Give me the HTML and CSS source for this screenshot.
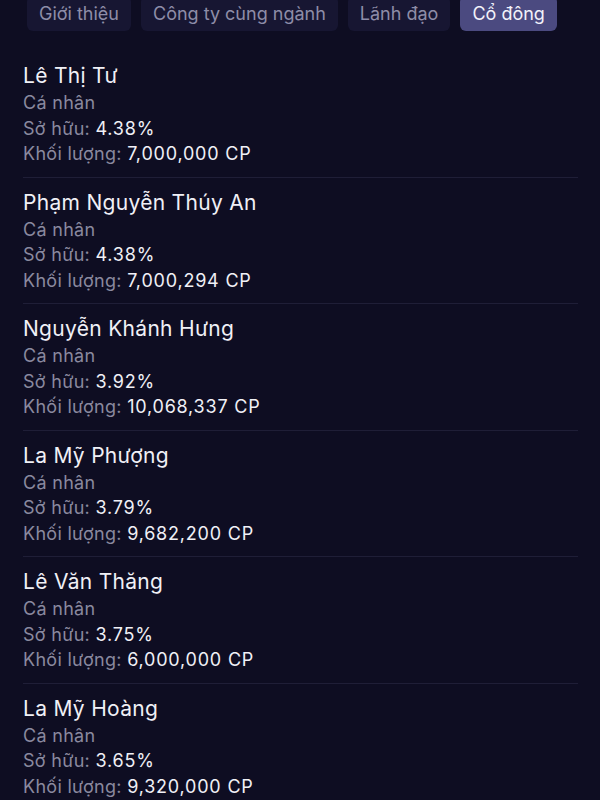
FILE: index.html
```html
<!DOCTYPE html>
<html lang="vi">
<head>
<meta charset="utf-8">
<link rel="stylesheet" href="styles.css">
</head>
<body>
<nav class="tabs">
  <span class="tab">Giới thiệu</span>
  <span class="tab">Công ty cùng ngành</span>
  <span class="tab">Lãnh đạo</span>
  <span class="tab active">Cổ đông</span>
</nav>
<ul class="list">
  <li class="item">
    <div class="name">Lê Thị Tư</div>
    <div class="line">Cá nhân</div>
    <div class="line">Sở hữu: <span class="val">4.38%</span></div>
    <div class="line">Khối lượng: <span class="val">7,000,000 CP</span></div>
  </li>
  <li class="item">
    <div class="name">Phạm Nguyễn Thúy An</div>
    <div class="line">Cá nhân</div>
    <div class="line">Sở hữu: <span class="val">4.38%</span></div>
    <div class="line">Khối lượng: <span class="val">7,000,294 CP</span></div>
  </li>
  <li class="item">
    <div class="name">Nguyễn Khánh Hưng</div>
    <div class="line">Cá nhân</div>
    <div class="line">Sở hữu: <span class="val">3.92%</span></div>
    <div class="line">Khối lượng: <span class="val">10,068,337 CP</span></div>
  </li>
  <li class="item">
    <div class="name">La Mỹ Phượng</div>
    <div class="line">Cá nhân</div>
    <div class="line">Sở hữu: <span class="val">3.79%</span></div>
    <div class="line">Khối lượng: <span class="val">9,682,200 CP</span></div>
  </li>
  <li class="item">
    <div class="name">Lê Văn Thăng</div>
    <div class="line">Cá nhân</div>
    <div class="line">Sở hữu: <span class="val">3.75%</span></div>
    <div class="line">Khối lượng: <span class="val">6,000,000 CP</span></div>
  </li>
  <li class="item">
    <div class="name">La Mỹ Hoàng</div>
    <div class="line">Cá nhân</div>
    <div class="line">Sở hữu: <span class="val">3.65%</span></div>
    <div class="line">Khối lượng: <span class="val">9,320,000 CP</span></div>
  </li>
</ul>
</body>
</html>
```
FILE: styles.css
```css
html, body {
  margin: 0;
  padding: 0;
  background: #0e0d22;
  font-family: Inter, "Noto Sans", "Liberation Sans", sans-serif;
  color: #f0f0f6;
  overflow: hidden;
}
.tabs {
  display: flex;
  gap: 10px;
  padding: 0 27px;
  margin-top: -4px;
}
.tab {
  display: block;
  height: 35px;
  line-height: 35px;
  padding: 0 12px;
  border-radius: 6px;
  background: #171632;
  color: #8e8da8;
  font-size: 18px;
  white-space: nowrap;
}
.tab.active {
  background: #4b4a80;
  color: #f2f2fa;
}
.list {
  list-style: none;
  margin: 20px 22px 0 23px;
  padding: 0;
}
.item {
  padding: 11px 0 10px;
  border-bottom: 1px solid #1f1e37;
}
.name {
  font-size: 21px;
  line-height: 28px;
  letter-spacing: 0.3px;
  color: #f0f0f6;
}
.line {
  font-size: 18px;
  line-height: 25.5px;
  letter-spacing: 0.3px;
  color: #8a899f;
}
.val {
  letter-spacing: 0.8px;
  color: #f0f0f6;
}
```
